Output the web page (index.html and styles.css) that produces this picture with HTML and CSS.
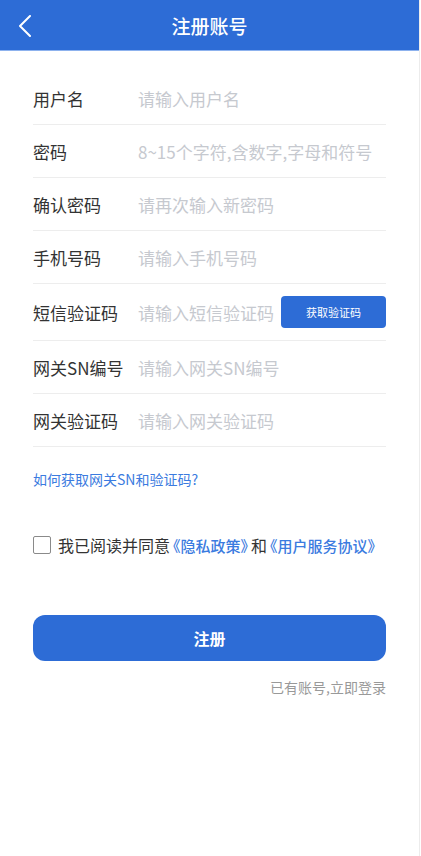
FILE: index.html
```html
<!DOCTYPE html>
<html lang="zh">
<head>
<meta charset="utf-8">
<link rel="stylesheet" href="styles.css">
</head>
<body>
<div class="page">
  <header class="topbar">
    <svg class="back" width="14" height="22" viewBox="0 0 14 22"><polyline points="12,1 2,11 12,21" fill="none" stroke="#fff" stroke-width="2" stroke-linecap="round" stroke-linejoin="round"/></svg>
    <h1 class="title">注册账号</h1>
  </header>
  <main class="content">
    <div class="form">
      <div class="row"><span class="label">用户名</span><span class="ph">请输入用户名</span></div>
      <div class="row"><span class="label">密码</span><span class="ph">8~15个字符,含数字,字母和符号</span></div>
      <div class="row"><span class="label">确认密码</span><span class="ph">请再次输入新密码</span></div>
      <div class="row"><span class="label">手机号码</span><span class="ph">请输入手机号码</span></div>
      <div class="row row-sms"><span class="label">短信验证码</span><span class="ph">请输入短信验证码</span><button class="code-btn">获取验证码</button></div>
      <div class="row"><span class="label">网关SN编号</span><span class="ph">请输入网关SN编号</span></div>
      <div class="row"><span class="label">网关验证码</span><span class="ph">请输入网关验证码</span></div>
    </div>
    <a class="help">如何获取网关SN和验证码?</a>
    <div class="agree">
      <span class="checkbox"></span>
      <span class="agree-text">我已阅读并同意<a class="doc">《隐私政策》</a>和<a class="doc">《用户服务协议》</a></span>
    </div>
    <button class="submit">注册</button>
    <div class="login">已有账号,立即登录</div>
  </main>
</div>
</body>
</html>
```

FILE: styles.css
```css
* { box-sizing: border-box; margin: 0; padding: 0; }
html, body { background: #fff; }
body {
  font-family: "Noto Sans CJK SC", "Noto Sans", sans-serif;
  width: 421px;
  height: 856px;
  overflow: hidden;
}
.page {
  width: 420px;
  height: 856px;
  border-right: 1px solid #ececec;
  background: #fff;
}
.topbar {
  height: 51px;
  background: #2d6cd6;
  border-bottom: 1px solid #8db2ee;
  display: flex;
  align-items: center;
  justify-content: center;
  position: relative;
}
.back {
  position: absolute;
  left: 18px;
  top: 15px;
}
.title {
  color: #fff;
  font-size: 19px;
  font-weight: 500;
  line-height: 1;
}
.content {
  padding: 21px 33px 0 33px;
}
.form {
  display: flex;
  flex-direction: column;
}
.row {
  height: 53px;
  border-bottom: 1px solid #ededed;
  display: flex;
  align-items: center;
}
.row-sms { height: 57px; }
.label {
  width: 105px;
  flex: none;
  font-size: 17px;
  color: #333;
}
.ph {
  flex: 1;
  font-size: 17px;
  color: #c6c9cf;
  white-space: nowrap;
}
.code-btn {
  flex: none;
  width: 105px;
  height: 32px;
  border: none;
  border-radius: 4px;
  background: #2d6cd6;
  color: #fff;
  font-family: inherit;
  font-size: 11px;
  margin-bottom: 1px;
}
.help {
  display: block;
  margin-top: 22px;
  font-size: 14px;
  color: #3b7be0;
  line-height: 20px;
}
.agree {
  display: flex;
  align-items: center;
  margin-top: 44px;
  height: 24px;
}
.checkbox {
  width: 18px;
  height: 18px;
  border: 1.5px solid #8a8a8a;
  border-radius: 2px;
  margin-right: 7px;
  flex: none;
}
.agree-text {
  font-size: 16px;
  color: #333;
  white-space: nowrap;
}
.doc {
  color: #3b7be0;
  font-size: 15px;
  font-weight: 500;
  font-feature-settings: "halt";
  padding: 0 3px;
}
.submit {
  display: block;
  width: 100%;
  height: 46px;
  margin-top: 58px;
  border: none;
  border-radius: 12px;
  background: #2d6cd6;
  color: #fff;
  font-family: inherit;
  font-size: 16px;
  font-weight: 700;
}
.login {
  text-align: right;
  margin-top: 16px;
  font-size: 14px;
  color: #999;
  line-height: 20px;
}
```
